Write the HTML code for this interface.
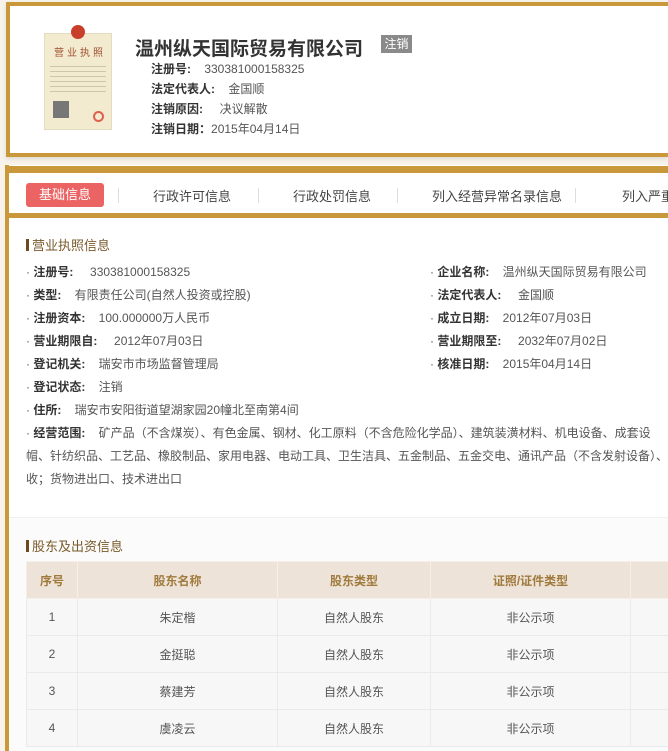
<!DOCTYPE html>
<html><head><meta charset="utf-8"><style>
*{margin:0;padding:0;box-sizing:border-box}
html,body{width:668px;height:751px;overflow:hidden}
body{background:#f7f2ea;font-family:"Liberation Sans","Noto Sans CJK SC",sans-serif;color:#333}
#w{position:relative;width:668px;height:751px;overflow:hidden}
.a{position:absolute;white-space:nowrap}
.gold{background:#c9983a}
.f{font-size:12px;color:#555}
.f b{color:#333;font-weight:bold}
.h{font-size:13px;color:#7a5a2a}
.h:before{content:"";display:inline-block;width:3px;height:12px;background:#6b4a1c;margin-right:3px;vertical-align:-1px}
table{border-collapse:collapse;font-size:12px;table-layout:fixed}
td,th{border:1px solid #eaeaea;text-align:center;height:37px;color:#555;font-weight:normal}
th{background:#ede3d8;color:#a07a3c;font-weight:bold;border-color:#f5efe8}
td{background:#f7f7f7}
</style></head><body><div id="w">
<div class="a" style="left:6px;top:2px;width:662px;height:155px;background:#fff;border:4px solid #c9983a;border-right:none;box-shadow:0 2px 4px rgba(0,0,0,.1)"></div>
<div class="a" style="left:44px;top:33px;width:68px;height:97px;background:#f3ebcf;border:1px solid #e5dcc0"></div>
<div class="a" style="left:71px;top:25px;width:14px;height:14px;border-radius:50%;background:#c8402a"></div>
<div class="a" style="left:54px;top:44px;font-size:10px;color:#a05030;letter-spacing:3px">营业执照</div>
<div class="a" style="left:50px;top:62px;width:56px;height:34px;background:repeating-linear-gradient(#f3ebcf 0 4px,#cfc6aa 4px 5px)"></div>
<div class="a" style="left:53px;top:101px;width:16px;height:17px;background:#777"></div>
<div class="a" style="left:93px;top:111px;width:11px;height:11px;border-radius:50%;border:2px solid #e06050"></div>
<div class="a" style="left:135px;top:34px;font-size:19px;font-weight:bold;color:#333">温州纵天国际贸易有限公司</div>
<div class="a" style="left:381px;top:35px;width:31px;height:18px;background:#8a8a8a;color:#fff;font-size:12px;line-height:18px;text-align:center">注销</div>
<div class="a f" style="left:151px;top:59px;line-height:20px"><b>注册号:</b>&nbsp;&nbsp;&nbsp;&nbsp;330381000158325<br><b>法定代表人:</b>&nbsp;&nbsp;&nbsp;&nbsp;金国顺<br><b>注销原因:</b>&nbsp;&nbsp;&nbsp;&nbsp;&nbsp;决议解散<br><b>注销日期：</b>2015年04月14日</div>
<div class="a" style="left:5px;top:165px;width:663px;height:600px;background:#fff;border-left:4px solid #c9983a"></div>
<div class="a gold" style="left:5px;top:166px;width:663px;height:7px"></div>
<div class="a gold" style="left:5px;top:213px;width:663px;height:5px"></div>
<div class="a" style="left:26px;top:183px;width:78px;height:24px;background:#ec6363;border-radius:3px;color:#fff;font-size:13px;line-height:24px;text-align:center">基础信息</div>
<div class="a" style="left:118px;top:188px;width:1px;height:15px;background:#ddd"></div>
<div class="a" style="left:258px;top:188px;width:1px;height:15px;background:#ddd"></div>
<div class="a" style="left:397px;top:188px;width:1px;height:15px;background:#ddd"></div>
<div class="a" style="left:575px;top:188px;width:1px;height:15px;background:#ddd"></div>
<div class="a" style="left:153px;top:186px;font-size:13px;color:#444">行政许可信息</div>
<div class="a" style="left:293px;top:186px;font-size:13px;color:#444">行政处罚信息</div>
<div class="a" style="left:432px;top:186px;font-size:13px;color:#444">列入经营异常名录信息</div>
<div class="a" style="left:622px;top:186px;font-size:13px;color:#444">列入严重</div>
<div class="a h" style="left:26px;top:235px">营业执照信息</div>
<div class="a f" style="left:26px;top:261px;line-height:23px">
· <b>注册号:</b>&nbsp;&nbsp;&nbsp;&nbsp;&nbsp;330381000158325<br>
· <b>类型:</b>&nbsp;&nbsp;&nbsp;&nbsp;有限责任公司(自然人投资或控股)<br>
· <b>注册资本:</b>&nbsp;&nbsp;&nbsp;&nbsp;100.000000万人民币<br>
· <b>营业期限自:</b>&nbsp;&nbsp;&nbsp;&nbsp;&nbsp;2012年07月03日<br>
· <b>登记机关:</b>&nbsp;&nbsp;&nbsp;&nbsp;瑞安市市场监督管理局<br>
· <b>登记状态:</b>&nbsp;&nbsp;&nbsp;&nbsp;注销<br>
· <b>住所:</b>&nbsp;&nbsp;&nbsp;&nbsp;瑞安市安阳街道望湖家园20幢北至南第4间<br>
· <b>经营范围:</b>&nbsp;&nbsp;&nbsp;&nbsp;矿产品（不含煤炭）、有色金属、钢材、化工原料（不含危险化学品）、建筑装潢材料、机电设备、成套设<br>
<span style="line-height:20px">帽、针纺织品、工艺品、橡胶制品、家用电器、电动工具、卫生洁具、五金制品、五金交电、通讯产品（不含发射设备）、<br>收；货物进出口、技术进出口</span></div>
<div class="a f" style="left:430px;top:261px;line-height:23px">
· <b>企业名称:</b>&nbsp;&nbsp;&nbsp;&nbsp;温州纵天国际贸易有限公司<br>
· <b>法定代表人:</b>&nbsp;&nbsp;&nbsp;&nbsp;&nbsp;金国顺<br>
· <b>成立日期:</b>&nbsp;&nbsp;&nbsp;&nbsp;2012年07月03日<br>
· <b>营业期限至:</b>&nbsp;&nbsp;&nbsp;&nbsp;&nbsp;2032年07月02日<br>
· <b>核准日期:</b>&nbsp;&nbsp;&nbsp;&nbsp;2015年04月14日</div>
<div class="a" style="left:9px;top:517px;width:659px;height:240px;background:#fbfbfb;border-top:1px solid #f0f0f0"></div>
<div class="a h" style="left:26px;top:536px">股东及出资信息</div>
<div class="a" style="left:26px;top:561px;width:642px;height:190px;overflow:hidden">
<table style="width:744px">
<tr><th style="width:51px">序号</th><th style="width:200px">股东名称</th><th style="width:153px">股东类型</th><th style="width:200px">证照/证件类型</th><th></th></tr>
<tr><td>1</td><td>朱定楷</td><td>自然人股东</td><td>非公示项</td><td></td></tr>
<tr><td>2</td><td>金挺聪</td><td>自然人股东</td><td>非公示项</td><td></td></tr>
<tr><td>3</td><td>蔡建芳</td><td>自然人股东</td><td>非公示项</td><td></td></tr>
<tr><td>4</td><td>虞凌云</td><td>自然人股东</td><td>非公示项</td><td></td></tr>
</table></div>
</div></body></html>
